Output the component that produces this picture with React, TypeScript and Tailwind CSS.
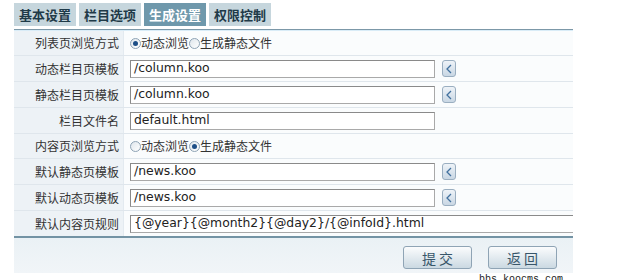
import React from "react";

const tabs = [
  { name: "基本设置", active: false },
  { name: "栏目选项", active: false },
  { name: "生成设置", active: true },
  { name: "权限控制", active: false },
];

function Radio({ checked }: { checked?: boolean }) {
  return (
    <span className="inline-flex h-[11px] w-[11px] shrink-0 items-center justify-center rounded-full border border-[#8ea3b5] bg-gradient-to-br from-[#dfe6ec] to-white">
      {checked && <span className="h-[5px] w-[5px] rounded-full bg-[#1d4e86]" />}
    </span>
  );
}

function PickBtn() {
  return (
    <span className="ml-[7px] flex h-[17px] w-[14px] shrink-0 items-center justify-center rounded-[3px] border border-[#9aaec0] bg-gradient-to-b from-[#eef3f8] to-[#c9d7e4]">
      <svg width="8" height="10" viewBox="0 0 8 10">
        <path d="M6 1 L2 5 L6 9" fill="none" stroke="#41709e" strokeWidth="1.3" />
      </svg>
    </span>
  );
}

function Field({ value, pick, wide }: { value: string; pick?: boolean; wide?: boolean }) {
  return (
    <div className="flex items-center">
      <div
        className={
          (wide ? "w-[460px] " : "w-[305px] ") +
          "flex h-[18px] shrink-0 items-center border border-[#a9a9a9] border-t-[#8a8a8a] border-l-[#8a8a8a] bg-white pl-[3px] font-['DejaVu_Sans',sans-serif] text-[12.4px] text-[#222]"
        }
      >
        {value}
      </div>
      {pick && <PickBtn />}
    </div>
  );
}

function Row({ label, h, children }: { label: string; h: string; children: React.ReactNode }) {
  return (
    <div className={h + " flex border-b border-[#dfe6ec]"}>
      <div className="flex w-[110px] shrink-0 items-center justify-end border-r border-[#e3eaf0] bg-[#edf2f6] pr-[4px] text-[#333]">
        {label}
      </div>
      <div className="flex min-w-0 flex-1 items-center overflow-hidden bg-[#fafcfd] pl-[6px]">{children}</div>
    </div>
  );
}

function RadioPair({ first }: { first: boolean }) {
  return (
    <div className="flex items-center text-[#333]">
      <Radio checked={first} />
      <span>动态浏览</span>
      <Radio checked={!first} />
      <span>生成静态文件</span>
    </div>
  );
}

export default function App() {
  return (
    <div className="h-[280px] w-[617px] overflow-hidden bg-white font-['Noto_Sans_CJK_SC',sans-serif] text-[12px] leading-none">
      <div className="flex gap-[3px] pl-[14px] pt-[3px]">
        {tabs.map((t) => (
          <div
            key={t.name}
            className={
              (t.active ? "bg-[#6f98ab] text-white " : "bg-[#c6d6dd] text-[#1f3a48] ") +
              "flex h-[23px] items-center px-[5px] text-[13px] font-bold"
            }
          >
            {t.name}
          </div>
        ))}
      </div>
      <div className="ml-[14px] mt-[3px] w-[559px]">
        <div className="border-t border-[#7c98a8]">
          <Row label="列表页浏览方式" h="h-[26px] border-t border-t-[#d9ecf7]">
            <RadioPair first />
          </Row>
          <Row label="动态栏目页模板" h="h-[26px]">
            <Field value="/column.koo" pick />
          </Row>
          <Row label="静态栏目页模板" h="h-[26px]">
            <Field value="/column.koo" pick />
          </Row>
          <Row label="栏目文件名" h="h-[26px]">
            <Field value="default.html" />
          </Row>
          <Row label="内容页浏览方式" h="h-[25px]">
            <RadioPair first={false} />
          </Row>
          <Row label="默认静态页模板" h="h-[26px]">
            <Field value="/news.koo" pick />
          </Row>
          <Row label="默认动态页模板" h="h-[26px]">
            <Field value="/news.koo" pick />
          </Row>
          <Row label="默认内容页规则" h="h-[25px] border-b-0">
            <Field value="{@year}{@month2}{@day2}/{@infoId}.html" wide />
          </Row>
        </div>
        <div className="flex h-[37px] justify-end gap-[16px] border-t-2 border-[#7393a4] bg-gradient-to-b from-[#eaf1f5] to-[#f1f5f8] pr-[16px] pt-[8px]">
          {["提 交", "返 回"].map((b) => (
            <div
              key={b}
              className="flex h-[23px] w-[69px] items-center justify-center rounded-[3px] border border-[#8fa4b5] bg-gradient-to-b from-[#fbfcfd] to-[#cbd9e2] text-[14px] text-[#38566a]"
            >
              {b}
            </div>
          ))}
        </div>
      </div>
      <div className="pl-[479px] pt-[1px] font-['Liberation_Mono',monospace] text-[10px] leading-[12px] text-[#222]">
        bbs.koocms.com
      </div>
    </div>
  );
}
